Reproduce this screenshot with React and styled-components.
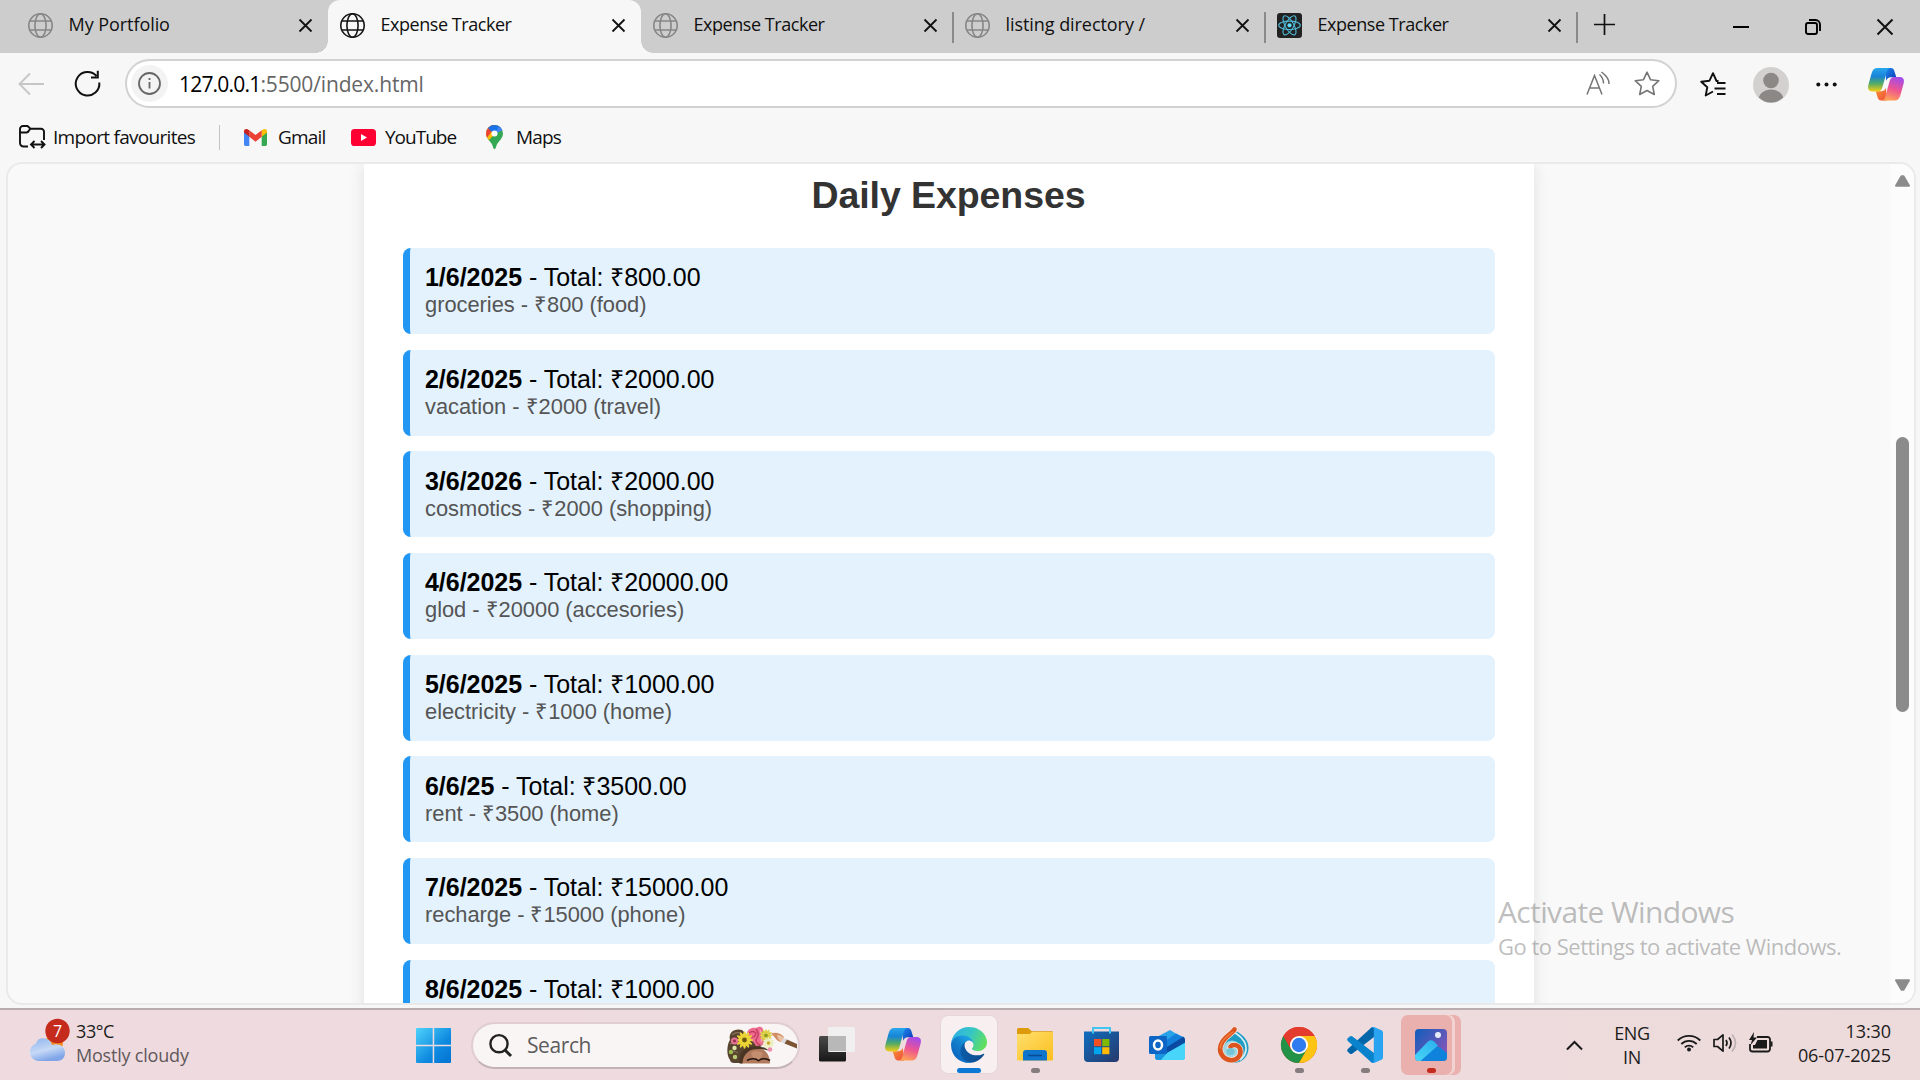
import React from "react";
import styled, { createGlobalStyle, css } from "styled-components";

const ui = `"Open Sans", "Noto Sans", sans-serif`;

const GlobalStyle = createGlobalStyle`
  * { box-sizing: border-box; }
  html, body { margin: 0; padding: 0; overflow: hidden; }
  svg { display: block; flex: none; overflow: visible; }
`;

const Desktop = styled.div`
  position: relative;
  display: flex;
  flex-direction: column;
  width: 1920px;
  height: 1080px;
  overflow: hidden;
  background: #f7f7f7;
  font-family: ${ui};
  color: #101010;
`;

/* ---------- window and tabs ---------- */

const TabStrip = styled.header`
  display: flex;
  flex: none;
  height: 53px;
  padding-left: 16px;
  background: #cdcdcd;
`;

const TabItem = styled.div`
  position: relative;
  display: flex;
  align-items: center;
  width: 312px;
  height: 53px;
  padding: 0 16px 2px 12px;
  ${(p) =>
    p.$active &&
    css`
      width: 313px;
      background: #f7f7f7;
      border-radius: 12px 12px 0 0;
      &::before,
      &::after {
        content: "";
        position: absolute;
        bottom: 0;
        width: 12px;
        height: 12px;
      }
      &::before {
        left: -12px;
        background: radial-gradient(circle at 0 0, transparent 11.5px, #f7f7f7 12px);
      }
      &::after {
        right: -12px;
        background: radial-gradient(circle at 100% 0, transparent 11.5px, #f7f7f7 12px);
      }
    `}
  ${(p) =>
    p.$divided &&
    css`
      &::after {
        content: "";
        position: absolute;
        right: -1px;
        top: 12px;
        width: 2px;
        height: 31px;
        background: #8a8a8a;
      }
    `}
`;

const TabTitle = styled.span`
  flex: 1;
  margin-left: 15.5px;
  padding-bottom: 4px;
  font-size: 18px;
  line-height: 24px;
  letter-spacing: ${(p) => p.$ls ?? -0.45}px;
  white-space: nowrap;
`;

const NewTab = styled.div`
  display: flex;
  align-items: center;
  margin-left: 17px;
  height: 48px;
`;

const WindowButtons = styled.div`
  display: flex;
  align-items: center;
  gap: 56px;
  height: 54px;
  margin-left: auto;
  padding-right: 27px;
`;

/* ---------- toolbar ---------- */

const Toolbar = styled.nav`
  display: flex;
  align-items: center;
  flex: none;
  height: 61px;
  padding: 0 16px 0 18px;
  & > svg + svg { margin-left: 30px; }
`;

const AddressBar = styled.div`
  display: flex;
  align-items: center;
  width: 1552px;
  height: 49px;
  margin-left: 24px;
  padding: 0 15px 0 4px;
  background: #fff;
  border: 2px solid #d2d2d2;
  border-radius: 25px;
  & > svg + svg { margin-left: 24px; }
`;

const InfoButton = styled.div`
  display: flex;
  align-items: center;
  justify-content: center;
  width: 37px;
  height: 37px;
  border-radius: 50%;
  background: #f3f3f3;
`;

const Url = styled.span`
  flex: 1;
  margin-left: 11px;
  font-size: 21px;
  line-height: 28px;
  letter-spacing: -0.15px;
  color: #666;
  b { font-weight: 400; color: #000; letter-spacing: -0.8px; }
`;

const ToolbarRight = styled.div`
  display: flex;
  align-items: center;
  margin-left: 23px;
  padding-top: 2px;
  gap: 27px;
  & > svg:last-child { margin-left: 4px; }
`;

const Bookmarks = styled.div`
  display: flex;
  align-items: center;
  flex: none;
  height: 48px;
  padding: 0 0 2px 19px;
`;

const Bookmark = styled.div`
  display: flex;
  align-items: center;
  gap: ${(p) => p.$gap}px;
  width: ${(p) => p.$w}px;
  font-size: 19px;
  line-height: 26px;
  letter-spacing: ${(p) => p.$ls ?? -0.6}px;
  white-space: nowrap;
`;

const BarDivider = styled.span`
  width: 1px;
  height: 25px;
  margin-right: 24px;
  background: #c4c4c4;
`;

/* ---------- page ---------- */

const Viewport = styled.main`
  display: flex;
  flex: none;
  width: 1910px;
  height: 843px;
  margin: 0 0 0 6px;
  overflow: hidden;
  background: #f9f9f9;
  border: 2px solid #eaeaea;
  border-radius: 16px;
`;

const Page = styled.div`
  flex: 1;
  padding-left: 356px;
  overflow: hidden;
`;

const Sheet = styled.section`
  width: 1170px;
  height: 900px;
  padding: 0 39px;
  background: #fff;
  box-shadow: 0 0 15.6px rgba(0, 0, 0, 0.1);
  font-family: "Liberation Sans", Arial, sans-serif;
`;

const Heading = styled.h2`
  margin: 0;
  height: 83.9px;
  padding: 10px 1px 0 0;
  font-size: 37.5px;
  line-height: 43px;
  letter-spacing: -0.08px;
  text-align: center;
  color: #333;
`;

const ExpenseCard = styled.article`
  height: 86px;
  margin-bottom: 15.7px;
  padding: 15.4px 15px 0;
  background: #e3f2fd;
  border-left: 7.8px solid #2196f3;
  border-radius: 7.8px;
`;

const Total = styled.div`
  height: 29px;
  font-size: 25px;
  line-height: 28px;
  letter-spacing: -0.03px;
  color: #000;
`;

const Detail = styled.div`
  font-size: 21.875px;
  line-height: 25px;
  letter-spacing: -0.02px;
  color: #555;
`;

const Scrollbar = styled.aside`
  display: flex;
  flex-direction: column;
  align-items: center;
  width: 24px;
  padding: 11px 0;
  background: #fcfcfc;
`;

const Thumb = styled.div`
  width: 13px;
  height: 275px;
  margin: 250px 0 267px;
  border-radius: 6.5px;
  background: #8b8b8b;
`;

const Watermark = styled.div`
  position: absolute;
  left: 1498px;
  top: 892px;
  color: rgba(125, 125, 125, 0.5);
  white-space: nowrap;
`;

const WatermarkTitle = styled.div`
  font-size: 30px;
  line-height: 40px;
  letter-spacing: -0.63px;
`;

const WatermarkText = styled.div`
  font-size: 22px;
  line-height: 29px;
  letter-spacing: -0.49px;
`;

/* ---------- taskbar ---------- */

const Taskbar = styled.footer`
  display: flex;
  align-items: center;
  flex: none;
  height: 72px;
  margin-top: auto;
  padding-right: 29px;
  background: linear-gradient(90deg, #efdbdf, #eedbde 60%, #eddada);
  border-top: 2px solid #b9adaf;
`;

const Weather = styled.div`
  display: flex;
  align-items: center;
  width: 416px;
  padding: 0 0 4px 28px;
  gap: 9px;
  & > svg { margin-bottom: 7px; }
`;

const Lines = styled.div`
  display: flex;
  flex-direction: column;
  text-align: ${(p) => p.$align || "left"};
  font-size: 18px;
  line-height: 24px;
  letter-spacing: ${(p) => p.$ls ?? -0.4}px;
  color: #1c1c1c;
  white-space: nowrap;
  width: ${(p) => (p.$w ? p.$w + "px" : "auto")};
  padding-bottom: ${(p) => p.$lift || 0}px;
  em { font-style: normal; color: #5f585a; letter-spacing: -0.2px; }
`;

const SearchBox = styled.div`
  display: flex;
  align-items: center;
  width: 329px;
  height: 47px;
  margin: 0 4px 0 20px;
  padding: 0 1px 0 16px;
  border: 2px solid #dfcdd0;
  border-bottom-color: #c3b3b6;
  border-radius: 24px;
  background: #faf5f5;
`;

const SearchLabel = styled.span`
  flex: 1;
  margin-left: 15px;
  font-size: 21px;
  line-height: 28px;
  letter-spacing: -0.4px;
  color: #5c5c5c;
`;

const AppSlot = styled.div`
  position: relative;
  display: flex;
  align-items: center;
  justify-content: center;
  width: 66px;
  height: 70px;
  padding-bottom: 1px;
`;

const Tile = styled.div`
  display: flex;
  align-items: center;
  justify-content: center;
  width: 56px;
  height: 57px;
  border-radius: 7px;
  ${(p) =>
    p.$open &&
    css`
      background: #f8eff0;
      box-shadow: 0 0 0 1px #e6d6d8;
    `}
  ${(p) =>
    p.$alert &&
    css`
      width: 51px;
      height: 60px;
      margin-left: -10px;
      padding-left: 10px;
      background: #e9b0ad;
      box-shadow: 3px 0 0 #f1d3d2, 9px 0 0 #e9b0ad;
      & > svg { margin-left: -1px; }
    `}
`;

const Indicator = styled.span`
  position: absolute;
  bottom: 7px;
  left: 50%;
  width: ${(p) => p.$w}px;
  height: 5px;
  margin-left: ${(p) => -p.$w / 2}px;
  border-radius: 3px;
  background: ${(p) => p.$color};
`;

const Tray = styled.div`
  display: flex;
  align-items: center;
  margin-left: auto;
`;

const TrayIcons = styled.div`
  display: flex;
  align-items: center;
  gap: 12px;
  margin: 0 17px 0 -4px;
  padding-bottom: 4px;
`;

/* ---------- icons ---------- */

const Globe = ({ color }) => (
  <svg width="25" height="25" viewBox="0 0 25 25" fill="none" stroke={color} strokeWidth="1.6">
    <circle cx="12.5" cy="12.5" r="11.7" />
    <ellipse cx="12.5" cy="12.5" rx="5.6" ry="11.7" />
    <path d="M1.8 8h21.4M1.8 17h21.4" />
  </svg>
);

const ReactLogo = () => (
  <svg width="25" height="25" viewBox="0 0 25 25" fill="none" stroke="#4fb8d6" strokeWidth="1.1">
    <rect width="25" height="25" rx="3" fill="#222" stroke="none" />
    {[30, 90, 150].map((a) => (
      <ellipse key={a} cx="12.5" cy="12.3" rx="10.8" ry="4.2" transform={`rotate(${a - 30} 12.5 12.3)`} />
    ))}
    <circle cx="12.5" cy="12.3" r="2.1" fill="#61dafb" stroke="none" />
  </svg>
);

const Cross = ({ size, w = 1.8 }) => (
  <svg width={size} height={size} viewBox={`0 0 ${size} ${size}`} stroke="#111" strokeWidth={w}>
    <path d={`M.5 .5L${size - 0.5} ${size - 0.5}M${size - 0.5} .5L.5 ${size - 0.5}`} />
  </svg>
);

const Triangle = ({ down }) => (
  <svg width="15" height="12" viewBox="0 0 15 12" fill="#8b8b8b" stroke="#8b8b8b" strokeWidth="2" strokeLinejoin="round">
    <path d={down ? "M1 1.3h13L8.500 10.7h-2z" : "M1 10.7h13L8.500 1.3h-2z"} />
  </svg>
);

const Copilot = ({ id, w = 36, h = 33 }) => (
  <svg width={w} height={h} viewBox="0 0 36 33">
    <defs>
      <linearGradient id={id + "a"} x1="0" y1="0" x2="0" y2="1">
        <stop offset="0" stopColor="#2aa7ee" />
        <stop offset=".35" stopColor="#1784d8" />
        <stop offset=".65" stopColor="#4fa968" />
        <stop offset="1" stopColor="#f4cf13" />
      </linearGradient>
      <linearGradient id={id + "b"} x1=".6" y1="0" x2=".3" y2="1">
        <stop offset="0" stopColor="#a64be8" />
        <stop offset=".5" stopColor="#ee5590" />
        <stop offset="1" stopColor="#ffa552" />
      </linearGradient>
      <linearGradient id={id + "c"} x1="0" y1="0" x2="1" y2="1">
        <stop offset="0" stopColor="#1f8df0" />
        <stop offset="1" stopColor="#0b34b4" />
      </linearGradient>
      <linearGradient id={id + "d"} x1="0" y1="0" x2="1" y2="1">
        <stop offset="0" stopColor="#f9982f" />
        <stop offset="1" stopColor="#f04a3e" />
      </linearGradient>
    </defs>
    <path d="M17 0h5.8c2.3 0 3.1 1.3 3.7 3.4L28.300 9.200h-5.500c-2.500 0-4 1.500-4.600 3.600z" fill={`url(#${id}c)`} />
    <path d="M19 32.500h-5.800c-2.300 0-3.100-1.300-3.700-3.400L7.700 23.300h5.500c2.500 0 4-1.500 4.600-3.600z" fill={`url(#${id}d)`} />
    <path d="M9.500 0H22c-1.900.2-2.700 1.700-3.300 3.900l-4.300 15.300c-.7 2.600-2 4.300-4.700 4.300H4.400C.9 23.500-.6 21 .3 17.300L3.600 5.200C4.600 1.700 6.300 0 9.500 0z" fill={`url(#${id}a)`} />
    <path d="M26.500 32.500H14c1.900-.2 2.700-1.700 3.300-3.900l4.300-15.300c.7-2.600 2-4.300 4.700-4.300h5.300c3.500 0 5 2.500 4.100 6.200l-3.300 12.100c-1 3.500-2.700 5.200-5.900 5.200z" fill={`url(#${id}b)`} />
  </svg>
);

const Gmail = () => (
  <svg width="23" height="17" viewBox="0 0 23 17">
    <path d="M0 2.500v12.800C0 16.400.7 17 1.600 17h3.700V6z" fill="#4285f4" />
    <path d="M23 2.500v12.800c0 1.100-.7 1.700-1.600 1.700h-3.700V6z" fill="#34a853" />
    <path d="M17.700 1.200v6.600L23 3.600V2.200C23 .2 20.800-.7 19.200.4z" fill="#fbbc04" />
    <path d="M5.300 7.800V1.200l6.200 4.900 6.200-4.900v6.600l-6.200 4.900z" fill="#ea4335" />
    <path d="M0 2.200v1.400l5.300 4.200V1.200L3.800.4C2.200-.7 0 .2 0 2.200z" fill="#c5221f" />
  </svg>
);

const YouTube = () => (
  <svg width="25" height="17" viewBox="0 0 25 17">
    <rect width="25" height="17" rx="3.600" fill="#ff0033" />
    <path d="M10 5l6 3.500-6 3.500z" fill="#fff" />
  </svg>
);

const MapsPin = () => (
  <svg width="17" height="24" viewBox="0 0 17 24">
    <defs>
      <clipPath id="pin">
        <path d="M8.500 0a8.500 8.500 0 0 1 8.500 8.500c0 5-4.500 7.500-6.300 11.500-.8 1.800-1 4-2.200 4s-1.400-2.200-2.200-4C4.500 16 0 13.500 0 8.500A8.500 8.500 0 0 1 8.500 0z" />
      </clipPath>
    </defs>
    <g clipPath="url(#pin)">
      <path d="M0 0h17v24H0z" fill="#34a853" />
      <path d="M0 18L17 1V0H0z" fill="#fbbc04" />
      <path d="M0 14L12-2H0z" fill="#ea4335" />
      <path d="M2 3L8 9l9-6V-1H3z" fill="#1a73e8" />
      <path d="M8.500 8.500L14 0l4 5z" fill="#4285f4" />
    </g>
    <circle cx="8.500" cy="8.500" r="3" fill="#fff" />
  </svg>
);

const CloudIcon = () => (
  <svg width="39" height="44" viewBox="0 0 39 44">
    <defs>
      <linearGradient id="cl" x1="0" y1="0" x2=".4" y2="1">
        <stop offset="0" stopColor="#8fb3ee" />
        <stop offset=".6" stopColor="#c6d9f6" />
        <stop offset="1" stopColor="#7fa5e8" />
      </linearGradient>
    </defs>
    <circle cx="26" cy="25" r="9" fill="#f58a1f" />
    <path d="M10 43a9 9 0 0 1-2-17.500C9 21 13 19.500 17 20.500c4 .5 6.500 3.500 7 6.500 6-2.500 13 1 13 8 0 5-3.500 8-8 8z" fill="url(#cl)" />
    <circle cx="29.500" cy="13" r="12.200" fill="#c42b1c" />
    <text x="29.500" y="18.500" fill="#fff" fontSize="16" textAnchor="middle" fontFamily="Open Sans, sans-serif">7</text>
  </svg>
);

const WindowsLogo = () => (
  <svg width="35" height="35" viewBox="0 0 35 35">
    <defs>
      <linearGradient id="wl" gradientUnits="userSpaceOnUse" x1="0" y1="0" x2="35" y2="35">
        <stop offset="0" stopColor="#4fd2fb" />
        <stop offset=".6" stopColor="#0f8be0" />
        <stop offset="1" stopColor="#0272d2" />
      </linearGradient>
    </defs>
    <g fill="url(#wl)">
      <path d="M1 0h15.700v16.700H0V1a1 1 0 0 1 1-1z" />
      <path d="M18.200 0H34a1 1 0 0 1 1 1v15.700H18.200z" />
      <path d="M0 18.200h16.700V35H1a1 1 0 0 1-1-1z" />
      <path d="M18.200 18.200H35V34a1 1 0 0 1-1 1H18.200z" />
    </g>
  </svg>
);

const Daisy = ({ x, y, r, c = "#ecd536", m = "#6d5a10" }) => (
  <g transform={`translate(${x} ${y})`}>
    {[0, 30, 60, 90, 120, 150].map((a) => (
      <ellipse key={a} rx={r} ry={r * 0.22} fill={c} transform={`rotate(${a})`} />
    ))}
    <circle r={r * 0.28} fill={m} />
  </g>
);

const FlowerArt = () => (
  <svg width="70" height="37" viewBox="0 0 70 37">
    <path d="M3 33C-1 28 0 17 3 13 1 5 8 1 15 3l8 8 12 8-14 6-6 11H7c-2 0-4-1-4-3z" fill="#57442f" />
    <path d="M5 8q5-4 10-1M3 17q4-3 8 0M4 26q3-3 7 0" fill="none" stroke="#8a745a" strokeWidth="1.200" />
    <path d="M14 36.500c0-9 4-15.500 14-16 9 0 15 6 15 16z" fill="#b27a5c" />
    <path d="M24 26q5-4 12 0l-3 7h-6z" fill="#c48e70" />
    <path d="M12.500 36.500c-1-9 3-16 13-17 8-.5 14 1 16 4-8-2-15-2-20 1-4 3-6 7-6 12z" fill="#4a3424" />
    <path d="M20 33.500c4-2.500 9-2 11.500.2C34 31.500 39 31 43 33.500" fill="none" stroke="#22140e" strokeWidth="1.500" />
    <path d="M20 7c0-5 5-7 9-6 5-3 8 0 7 4 3 4 2 8 0 13l-7 1c-2-5-8-6-9-12z" fill="#ee6c8d" />
    <path d="M22 6q4-3 7 0-1 5-5 4M29 2q4 5 1 9t3 7" fill="none" stroke="#c43a62" strokeWidth="1.300" />
    <path d="M33 3q3 6 1 12" fill="none" stroke="#f8a7ba" strokeWidth="1.300" />
    <Daisy x={39} y={8.500} r={6.500} c="#dbd046" m="#8b9a28" />
    <Daisy x={17.500} y={13} r={8.800} />
    <Daisy x={41.500} y={16} r={6} c="#eceebf" m="#c8a52a" />
    <circle cx="7.500" cy="14" r="3.600" fill="#e77394" />
    <circle cx="7.500" cy="14" r="1.400" fill="#8f2e4b" />
    <circle cx="43" cy="22.500" r="2.300" fill="#f08eae" />
    <circle cx="4" cy="25" r="2.200" fill="#9bbd4e" />
    <circle cx="8" cy="30" r="2.200" fill="#b9cc72" />
    <circle cx="7.500" cy="21" r="2.200" fill="#dce6a8" />
    <path d="M44 6.500c4-1.500 9-1 13 3.500l-3 5c-5-1-6-5.500-10-8.500z" fill="#d08c62" />
    <path d="M50 8c3 0 5 1 7 3l-2.500 4c-2-1-3.500-3-4.500-7z" fill="#eac3a5" />
    <path d="M54 15l3-4 3 1.500-2.500 4z" fill="#d9dbe0" />
    <path d="M57.500 16.500l2.500-4L70 17v4.500z" fill="#7c5634" />
  </svg>
);

const TaskView = () => (
  <svg width="36" height="35" viewBox="0 0 36 35">
    <defs>
      <linearGradient id="tv" x1="0" y1="0" x2="0" y2="1">
        <stop offset="0" stopColor="#4a4a4a" />
        <stop offset="1" stopColor="#171717" />
      </linearGradient>
    </defs>
    <rect y="9" width="27" height="25.500" rx="1.500" fill="url(#tv)" />
    <rect x="9" y="0" width="27" height="25" rx="1.500" fill="#f0f0f0" />
    <path d="M9 9h18v15H9z" fill="#b8b8b8" />
  </svg>
);

const EdgeLogo = () => (
  <svg width="36" height="36" viewBox="0 0 256 256">
    <defs>
      <linearGradient id="e1" x1=".2" y1=".6" x2="1" y2=".6">
        <stop offset="0" stopColor="#0c59a4" />
        <stop offset="1" stopColor="#114a8b" />
      </linearGradient>
      <linearGradient id="e2" x1=".8" y1=".3" x2=".3" y2=".9">
        <stop offset="0" stopColor="#1b9de2" />
        <stop offset=".4" stopColor="#1380cc" />
        <stop offset="1" stopColor="#0a67c0" />
      </linearGradient>
      <linearGradient id="e3" x1="0" y1=".3" x2="1" y2=".6">
        <stop offset="0" stopColor="#2fb0e4" />
        <stop offset=".5" stopColor="#36c6c4" />
        <stop offset="1" stopColor="#62e05a" />
      </linearGradient>
    </defs>
    <g transform="translate(-4.630 -4.920)">
      <path fill="url(#e1)" d="M235.680 195.460a93.730 93.730 0 0 1-10.540 4.710 101.870 101.870 0 0 1-35.900 6.460c-47.320 0-88.540-32.550-88.540-74.320A31.480 31.480 0 0 1 117.130 105c-42.800 1.800-53.800 46.400-53.800 72.530 0 73.880 68.090 81.370 82.760 81.370 7.910 0 19.840-2.300 27-4.560l1.310-.44a128.340 128.340 0 0 0 66.600-52.800 4 4 0 0 0-5.320-5.640z" />
      <path fill="url(#e2)" d="M110.340 246.340A79.200 79.200 0 0 1 87.600 225a80.720 80.720 0 0 1 29.530-120c3.120-1.470 8.450-4.130 15.540-4a32.350 32.350 0 0 1 25.690 13 31.880 31.880 0 0 1 6.360 18.660c0-.21 24.460-79.600-80-79.600-43.900 0-80 41.660-80 78.210a130.150 130.150 0 0 0 12.110 56 128 128 0 0 0 156.380 67.110 75.550 75.550 0 0 1-62.780-8z" />
      <path fill="url(#e3)" d="M156.940 153.780c-.81 1.050-3.300 2.500-3.300 5.660 0 2.610 1.700 5.120 4.720 7.230 14.380 10 41.490 8.680 41.560 8.680a59.560 59.560 0 0 0 30.270-8.350 61.380 61.380 0 0 0 30.430-52.880c.26-22.410-8-37.310-11.340-43.910-21.190-41.450-66.930-65.290-116.670-65.290a128 128 0 0 0-128 126.200c.48-36.540 36.800-66.050 80-66.050 3.500 0 23.460.34 42 10.070 16.340 8.580 24.900 18.940 30.850 29.210 6.180 10.670 7.280 24.150 7.280 29.520s-2.740 13.330-7.800 19.910z" />
    </g>
  </svg>
);

const FolderLogo = () => (
  <svg width="36" height="33" viewBox="0 0 36 33">
    <defs>
      <linearGradient id="fo" x1="0" y1="0" x2="1" y2="1">
        <stop offset="0" stopColor="#ffdf6e" />
        <stop offset="1" stopColor="#fbbf1e" />
      </linearGradient>
    </defs>
    <path d="M0 1.500A1.500 1.500 0 0 1 1.500 0h9.700l3.600 3.300H35A1 1 0 0 1 36 4.300V9H0z" fill="#dd9a0a" />
    <path d="M0 6h12.500l2.500-2H36v27.500a1 1 0 0 1-1 1H1a1 1 0 0 1-1-1z" fill="url(#fo)" />
    <path d="M6 32.500V25a3 3 0 0 1 3-3h18a3 3 0 0 1 3 3v7.500z" fill="#0f74cc" />
    <path d="M11 27.500h14" stroke="#0a4a92" strokeWidth="1.500" />
  </svg>
);

const StoreLogo = () => (
  <svg width="35" height="35" viewBox="0 0 35 35">
    <defs>
      <linearGradient id="st" x1="0" y1="0" x2="1" y2="1">
        <stop offset="0" stopColor="#0f6ec0" />
        <stop offset="1" stopColor="#27386a" />
      </linearGradient>
    </defs>
    <path d="M0 4.500h35V31a4 4 0 0 1-4 4H4a4 4 0 0 1-4-4z" fill="url(#st)" />
    <path d="M9 6.500V1h17v5.500" fill="none" stroke="#41c5f0" strokeWidth="2" />
    <path d="M10 12h7.200v7.200H10z" fill="#f25022" />
    <path d="M18.200 12h7.200v7.200h-7.200z" fill="#7fba00" />
    <path d="M10 20.200h7.200v7H10z" fill="#00a4ef" />
    <path d="M18.200 20.200h7.200v7h-7.200z" fill="#ffb900" />
  </svg>
);

const OutlookLogo = () => (
  <svg width="36" height="30" viewBox="0 0 36 30">
    <path d="M6 8L21 0l15 9v18a3 3 0 0 1-3 3H9a3 3 0 0 1-3-3z" fill="#29a3e8" />
    <path d="M16 15L34 6.500q2 1 2 3v3L18 23z" fill="#0a4aa0" />
    <path d="M15 12L27 3.500l7 3.500L18 17z" fill="#1381dc" />
    <path d="M18 23l18-10v14a3 3 0 0 1-3 3H9z" fill="#47d5fa" />
    <path d="M6 22l12 1-6 7H9a3 3 0 0 1-3-3z" fill="#1c95e0" />
    <rect y="6" width="18" height="18" rx="1.500" fill="#0d66c5" />
    <ellipse cx="9" cy="15" rx="4" ry="4.500" fill="none" stroke="#fff" strokeWidth="2.500" />
  </svg>
);

const SwirlLogo = () => (
  <svg width="32" height="36" viewBox="0 0 32 36" fill="none" strokeLinecap="round">
    <path d="M19 4c7 4 12.500 9 12.500 17 0 9-7 15-15.500 15S.7 29 .7 21.500z" fill="#1f9cc4" />
    <path d="M18.500 6c6 4 11.500 9 10.500 17-.7 4-2.500 7-5.500 9.500" stroke="#d6eff5" strokeWidth="1.800" />
    <circle cx="15" cy="22.500" r="9" fill="#9fd6e2" />
    <path d="M17.500 2.500C16 6.500 3.500 11 3.300 22 3.300 28 8 33 14.500 33c5 0 9-3.700 9-8.500 0-4-3-6.500-6.500-6.500-2 0-3.500 1-4 2.500" stroke="#f7e2d6" strokeWidth="6" />
    <path d="M17.500 2.300C16 6.500 3.500 11 3.100 22 3.100 28 8 33.200 14.500 33.200c5.300 0 9-3.900 9-8.700 0-4-3-6.500-6.500-6.500-1.500 0-2.700.6-3.500 1.600" stroke="#dc5420" strokeWidth="4.600" />
    <path d="M16 5C11 9 3.500 13.500 3.300 21" stroke="#ef7a3a" strokeWidth="1.600" />
    <ellipse cx="13.500" cy="24.500" rx="4" ry="3.600" fill="#74c4d8" />
  </svg>
);

const ChromeLogo = () => (
  <svg width="36" height="36" viewBox="0 0 36 36">
    <circle cx="18" cy="18" r="18" fill="#e33b2e" />
    <path d="M2.400 9A18 18 0 0 0 18 36l8-13.500H18L10.200 22.500z" fill="#229346" />
    <path d="M18 36A18 18 0 0 0 33.600 9H18l7.800 13.500z" fill="#fdc413" />
    <path d="M2.400 9A18 18 0 0 1 33.600 9H18l-7.800 13.500z" fill="#e33b2e" />
    <circle cx="18" cy="18" r="9" fill="#fff" />
    <circle cx="18" cy="18" r="7.200" fill="#2f7bf0" />
  </svg>
);

const CodeLogo = () => (
  <svg width="36" height="36" viewBox="0 0 36 36">
    <path d="M27 10L5.500 26.500q-1.500 1-2.800 0L.8 24.800q-1.400-1.300 0-2.700L25 0h2z" fill="#0065a9" />
    <path d="M27 26L5.500 9.500q-1.500-1-2.800 0L.8 11.200q-1.400 1.300 0 2.700L25 36h2z" fill="#0a83cd" />
    <path d="M27 0L34.500 3.200Q36 4 36 5.500v25q0 1.500-1.500 2.300L27 36c-1.200 0-1.800-.4-2.200-1h2V1h-2c.4-.6 1-1 2.200-1z" fill="#2aa4f0" />
  </svg>
);

const PhotosLogo = () => (
  <svg width="32" height="32" viewBox="0 0 32 32">
    <defs>
      <linearGradient id="p1" x1="0" y1="0" x2="1" y2=".8">
        <stop offset="0" stopColor="#0f5ebb" />
        <stop offset="1" stopColor="#8a55b8" />
      </linearGradient>
      <linearGradient id="p2" x1="0" y1="1" x2="1" y2="0">
        <stop offset="0" stopColor="#47d6f8" />
        <stop offset="1" stopColor="#2bb0ee" />
      </linearGradient>
      <clipPath id="pc"><rect width="32" height="32" rx="4" /></clipPath>
    </defs>
    <g clipPath="url(#pc)">
      <path d="M0 0h32v32H0z" fill="url(#p1)" />
      <path d="M5 32L20 18.500q2.500-1.500 5 0L32 24v8z" fill="#0f83dc" />
      <path d="M0 26L13 12.500q3-2.500 6 0l4 4L5.500 32H0z" fill="url(#p2)" />
    </g>
    <circle cx="23" cy="6" r="3" fill="#e8ecf8" />
  </svg>
);

/* ---------- data ---------- */

const tabs = [
  { title: "My Portfolio", ls: -0.06 },
  { title: "Expense Tracker", active: true },
  { title: "Expense Tracker", divided: true },
  { title: "listing directory /", divided: true, ls: -0.06 },
  { title: "Expense Tracker", divided: true, react: true },
];

const expenses = [
  ["1/6/2025", "800.00", "groceries - ₹800 (food)"],
  ["2/6/2025", "2000.00", "vacation - ₹2000 (travel)"],
  ["3/6/2026", "2000.00", "cosmotics - ₹2000 (shopping)"],
  ["4/6/2025", "20000.00", "glod - ₹20000 (accesories)"],
  ["5/6/2025", "1000.00", "electricity - ₹1000 (home)"],
  ["6/6/25", "3500.00", "rent - ₹3500 (home)"],
  ["7/6/2025", "15000.00", "recharge - ₹15000 (phone)"],
  ["8/6/2025", "1000.00", ""],
];

const grey = "#857c7e";
const apps = [
  { icon: <TaskView /> },
  { icon: <Copilot id="cb" /> },
  { icon: <EdgeLogo />, open: true, mark: ["#0a78d4", 24] },
  { icon: <FolderLogo />, mark: [grey, 9] },
  { icon: <StoreLogo /> },
  { icon: <OutlookLogo /> },
  { icon: <SwirlLogo /> },
  { icon: <ChromeLogo />, mark: [grey, 9] },
  { icon: <CodeLogo />, mark: [grey, 9] },
  { icon: <PhotosLogo />, alert: true, mark: ["#c42b1c", 9] },
];

export default function App() {
  return (
    <Desktop>
      <GlobalStyle />
      <TabStrip>
        {tabs.map((t, i) => (
          <TabItem key={i} $active={t.active} $divided={t.divided}>
            {t.react ? <ReactLogo /> : <Globe color={t.active ? "#151515" : "#868686"} />}
            <TabTitle $ls={t.ls}>{t.title}</TabTitle>
            <Cross size={13} />
          </TabItem>
        ))}
        <NewTab>
          <svg width="21" height="21" viewBox="0 0 21 21" stroke="#111" strokeWidth="1.700">
            <path d="M10.500 0v21M0 10.500h21" />
          </svg>
        </NewTab>
        <WindowButtons>
          <svg width="16" height="16" viewBox="0 0 16 16" stroke="#000" strokeWidth="2"><path d="M0 8h16" /></svg>
          <svg width="16" height="16" viewBox="0 0 16 16" fill="none" stroke="#000" strokeWidth="1.900">
            <rect x="1" y="4" width="11" height="11" rx="2" />
            <path d="M4 1h6.500A4.500 4.500 0 0 1 15 5.500V12" />
          </svg>
          <Cross size={16} w={2} />
        </WindowButtons>
      </TabStrip>

      <Toolbar>
        <svg width="26" height="22" viewBox="0 0 26 22" fill="none" stroke="#c6c6c6" strokeWidth="1.800">
          <path d="M12 .5L1.500 11 12 21.500M1.500 11H26" />
        </svg>
        <svg width="27" height="27" viewBox="0 0 27 27" fill="none" stroke="#111" strokeWidth="2">
          <path d="M25.300 12.500A11.800 11.800 0 1 1 22.500 6M23.800 .8V7.500H17" />
        </svg>
        <AddressBar>
          <InfoButton>
            <svg width="23" height="23" viewBox="0 0 23 23" fill="none" stroke="#666" strokeWidth="1.800">
              <circle cx="11.500" cy="11.500" r="10.500" />
              <path d="M11.500 10v6.500M11.500 6v2" />
            </svg>
          </InfoButton>
          <Url><b>127.0.0.1</b>:5500/index.html</Url>
          <svg width="24" height="24" viewBox="0 0 24 24" fill="none" stroke="#757575" strokeWidth="1.500">
            <path d="M1 22.500L8.500 3.500 16 22.500M3.500 16h10M13.500 2.500q4 3.500 4 9M15.500 0q8 6 7.500 12" />
          </svg>
          <svg width="26" height="25" viewBox="0 0 26 25" fill="none" stroke="#757575" strokeWidth="1.600" strokeLinejoin="round">
            <path d="M13 1.200l3.500 7.500 8.300 1-6.100 5.600 1.600 8.200L13 19.500l-7.300 4 1.600-8.200L1.200 9.700l8.300-1z" />
          </svg>
        </AddressBar>
        <ToolbarRight>
          <svg width="26" height="25" viewBox="0 0 26 25" fill="none" stroke="#111" strokeWidth="1.900" strokeLinejoin="round">
            <path d="M18.500 9H16.500L13 1.200 9.500 8.700l-8.300 1 6.100 5.600-1.600 8.200 7.300-4M17 11h8.500M14.500 16.500h11M17 22h8.500" />
          </svg>
          <svg width="36" height="36" viewBox="0 0 36 36">
            <defs><clipPath id="av"><circle cx="18" cy="18" r="17.500" /></clipPath></defs>
            <circle cx="18" cy="18" r="18" fill="#d2d1cf" />
            <circle cx="18" cy="13.500" r="7.800" fill="#8b8886" />
            <ellipse cx="18" cy="33" rx="12.500" ry="10.500" fill="#8b8886" clipPath="url(#av)" />
          </svg>
          <svg width="21" height="5" viewBox="0 0 21 5" fill="#111">
            <circle cx="2.300" cy="2.500" r="2" /><circle cx="10.500" cy="2.500" r="2" /><circle cx="18.700" cy="2.500" r="2" />
          </svg>
          <Copilot id="ca" />
        </ToolbarRight>
      </Toolbar>

      <Bookmarks>
        <Bookmark $gap={8} $w={200} $ls={-0.7}>
          <svg width="26" height="25" viewBox="0 0 26 25" fill="none" stroke="#111" strokeWidth="1.900">
            <path d="M9 21.500H4.500A3.500 3.500 0 0 1 1 18V4a3 3 0 0 1 3-3h4.500l3 2.700H22a3 3 0 0 1 3 3V15M1 7.500h6.500q1.500 0 2.500-2l1.500-1.800M12.500 19.500h12.500M15.500 16l-3.500 3.500 3.500 3.500M22 16l3.500 3.500L22 23" />
          </svg>
          Import favourites
        </Bookmark>
        <BarDivider />
        <Bookmark $gap={11} $w={107} $ls={-0.8}><Gmail />Gmail</Bookmark>
        <Bookmark $gap={9} $w={135} $ls={-1}><YouTube />YouTube</Bookmark>
        <Bookmark $gap={13} $w={100} $ls={-0.8}><MapsPin />Maps</Bookmark>
      </Bookmarks>

      <Viewport>
        <Page>
          <Sheet>
            <Heading>Daily Expenses</Heading>
            {expenses.map(([date, total, detail]) => (
              <ExpenseCard key={date}>
                <Total><strong>{date}</strong> - Total: ₹{total}</Total>
                <Detail>{detail}</Detail>
              </ExpenseCard>
            ))}
          </Sheet>
        </Page>
        <Scrollbar>
          <Triangle />
          <Thumb />
          <Triangle down />
        </Scrollbar>
      </Viewport>

      <Taskbar>
        <Weather>
          <CloudIcon />
          <Lines><span>33°C</span><em>Mostly cloudy</em></Lines>
        </Weather>
        <WindowsLogo />
        <SearchBox>
          <svg width="23" height="23" viewBox="0 0 23 23" fill="none" stroke="#222" strokeWidth="2.400">
            <circle cx="10" cy="9.700" r="8.600" />
            <path d="M16 16l6 6" strokeWidth="3" />
          </svg>
          <SearchLabel>Search</SearchLabel>
          <FlowerArt />
        </SearchBox>
        {apps.map((a, i) => (
          <AppSlot key={i}>
            <Tile $open={a.open} $alert={a.alert}>{a.icon}</Tile>
            {a.mark && <Indicator $color={a.mark[0]} $w={a.mark[1]} />}
          </AppSlot>
        ))}
        <Tray>
          <svg width="17" height="11" viewBox="0 0 17 11" fill="none" stroke="#1a1a1a" strokeWidth="2">
            <path d="M1 9.500l7.500-7.500L16 9.500" />
          </svg>
          <Lines $align="center" $w={98}><span>ENG</span><span>IN</span></Lines>
          <TrayIcons>
            <svg width="24" height="18" viewBox="0 0 24 18" fill="none" stroke="#1a1a1a" strokeWidth="1.800">
              <path d="M.7 6.500a16 16 0 0 1 22.600 0M4.300 10a11 11 0 0 1 15.400 0M7.800 13.300a6 6 0 0 1 8.400 0" />
              <circle cx="12" cy="15.500" r="2" fill="#1a1a1a" stroke="none" />
            </svg>
            <svg width="24" height="20" viewBox="0 0 24 20" fill="none" stroke="#1a1a1a" strokeWidth="1.700" strokeLinejoin="round">
              <path d="M1 6.500h3.500L10 1.800v16.400L4.500 13.500H1zM13 7q2 3 0 6M16 4.500q4 5.500 0 11" />
              <path d="M19 1.500q7 8.500 0 17" stroke="#bfb2b3" />
            </svg>
            <svg width="24" height="22" viewBox="0 0 24 22" fill="none" stroke="#1a1a1a" strokeWidth="1.800">
              <path d="M8 5h10.500a2.500 2.500 0 0 1 2.500 2.500V17a2.500 2.500 0 0 1-2.500 2.500H3.500A2.500 2.500 0 0 1 1 17v-5" />
              <path d="M8.500 8H18v8.500H4V13h2z" fill="#1a1a1a" stroke="none" />
              <path d="M21.500 9.500h2v5h-2z" fill="#1a1a1a" stroke="none" />
              <path d="M5 0L0 8h3L1.500 13 8 5.500H4.500z" fill="#1a1a1a" stroke="none" />
            </svg>
          </TrayIcons>
          <Lines $align="right" $w={101} $ls={-0.08} $lift={4}><span>13:30</span><span>06-07-2025</span></Lines>
        </Tray>
      </Taskbar>

      <Watermark>
        <WatermarkTitle>Activate Windows</WatermarkTitle>
        <WatermarkText>Go to Settings to activate Windows.</WatermarkText>
      </Watermark>
    </Desktop>
  );
}
